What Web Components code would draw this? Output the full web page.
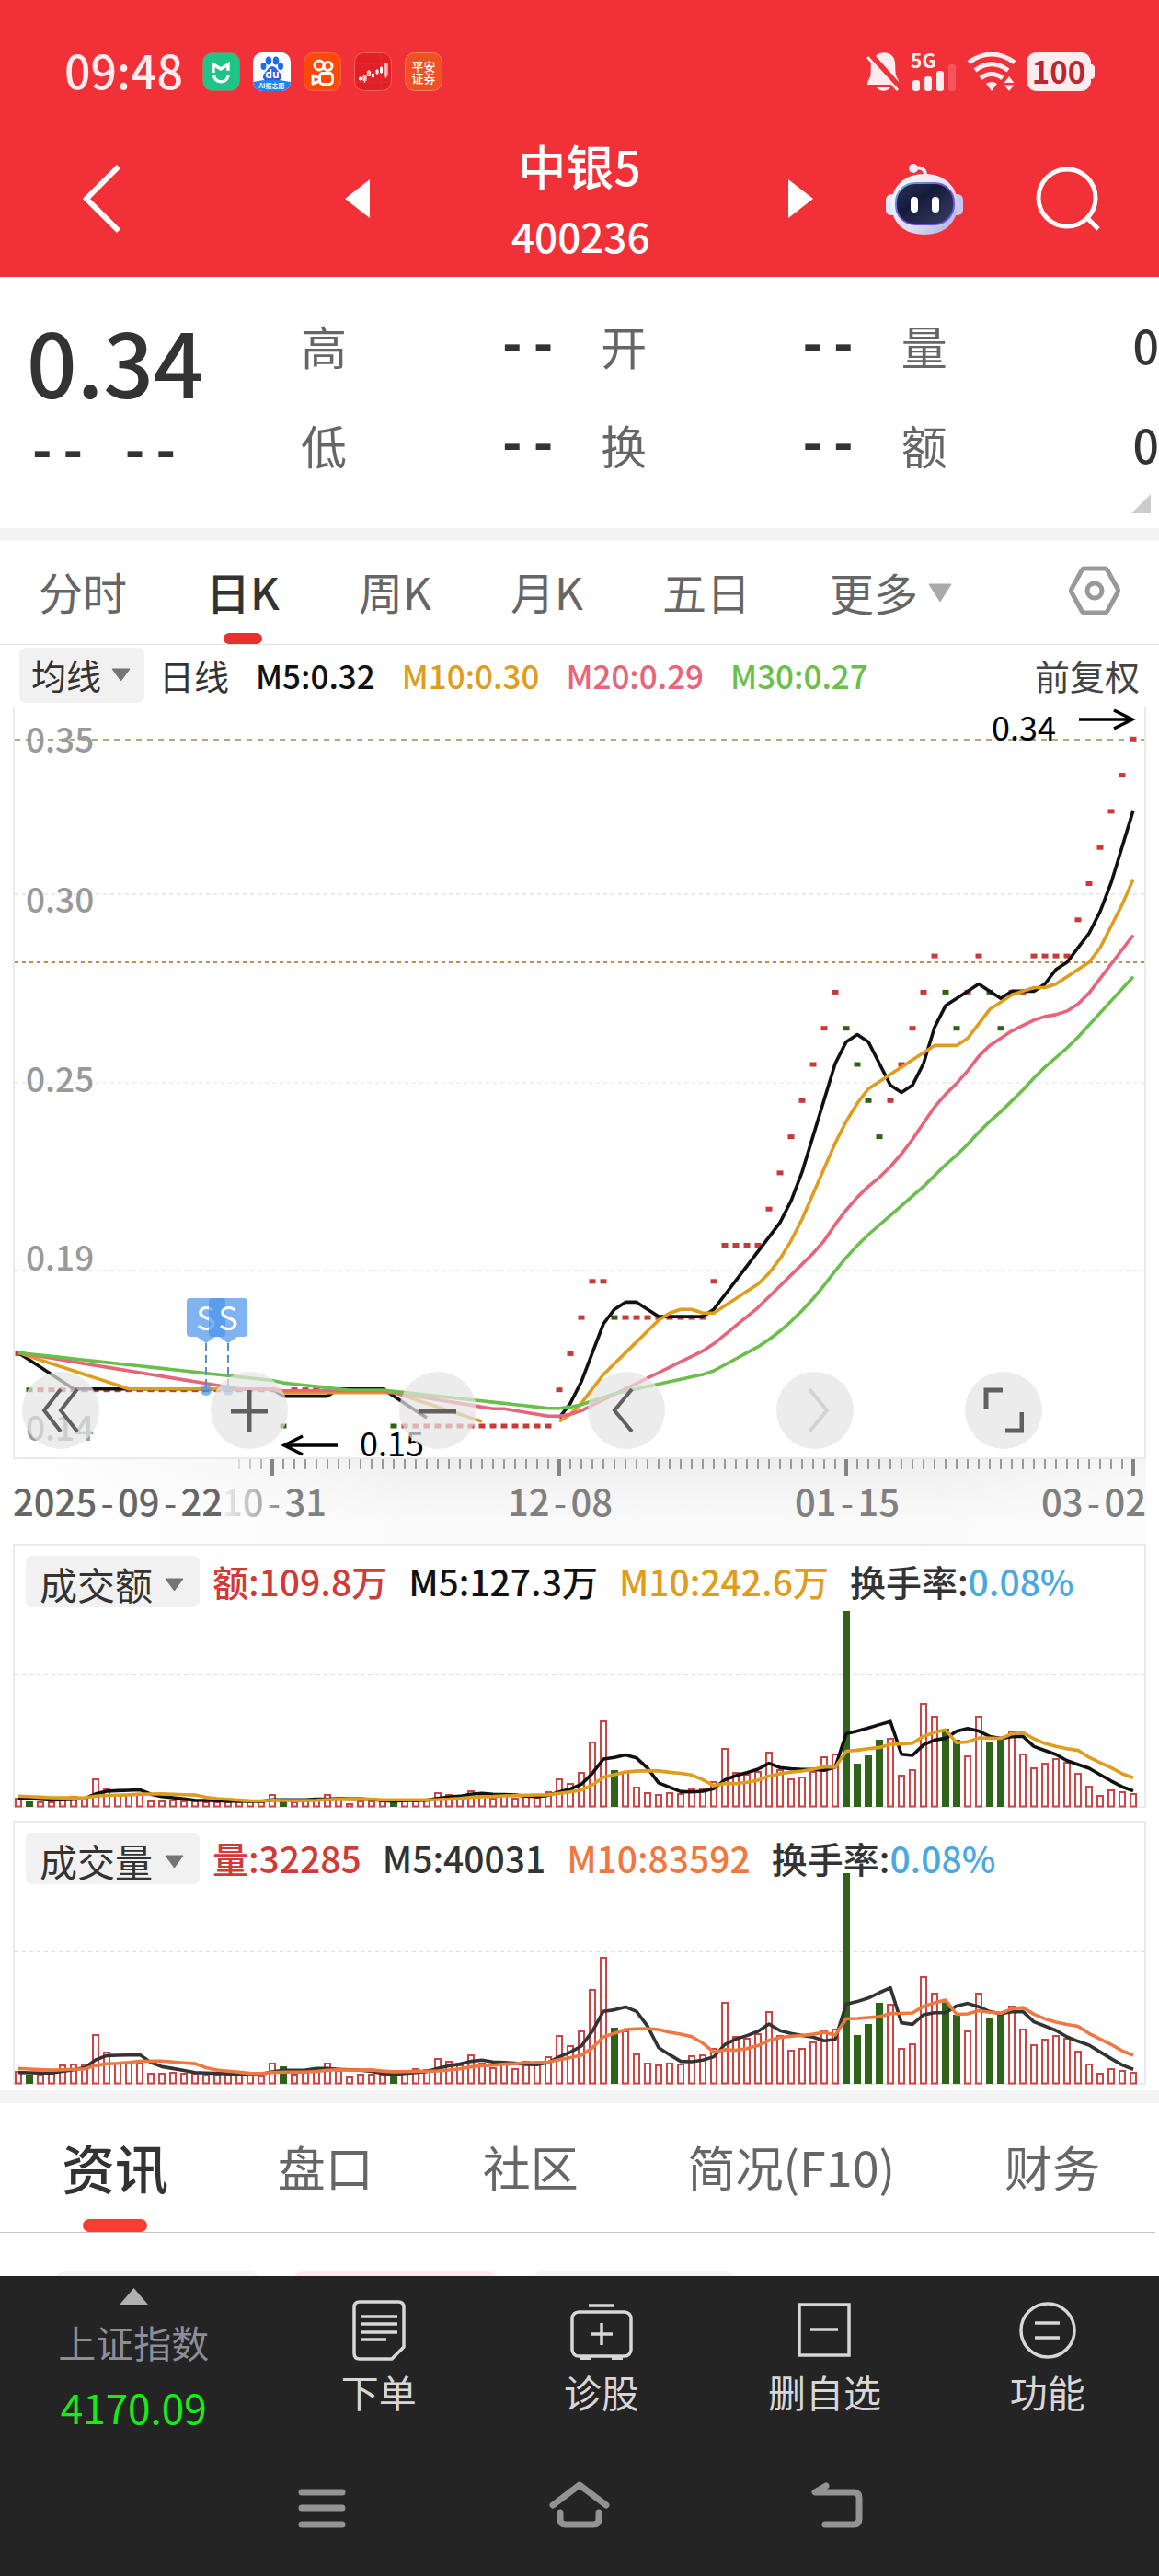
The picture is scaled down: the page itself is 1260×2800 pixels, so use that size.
<!DOCTYPE html>
<html lang="zh-CN">
<head>
<meta charset="utf-8">
<meta name="viewport" content="width=device-width">
<title>中银5 400236</title>
<style>
html,body{margin:0;padding:0;background:#fff}
body{font-family:"Noto Sans CJK SC",sans-serif;color:#333;min-height:100vh;display:flex;flex-direction:column}
</style>
</head>
<body>
<stock-page></stock-page>

<script>
const RESET = `*{box-sizing:border-box}
button,select{font:inherit;color:inherit;background:none;border:0;padding:0;margin:0;cursor:pointer}
a{color:inherit;text-decoration:none}
svg{display:block}`;

class Base extends HTMLElement {
  connectedCallback() {
    if (this.shadowRoot) return;
    this.attachShadow({ mode: 'open' }).innerHTML = `<style>${RESET}${this.css()}</style>${this.html()}`;
  }
  css() { return ''; }
  html() { return ''; }
}

/* ---------- status bar ---------- */
class StatusBar extends Base {
  css() { return `:host{display:flex;align-items:center;height:48px;margin:54px 70px 0 70px;color:#ffecee}
  .time{font-size:50px;line-height:42px;padding-bottom:6px;font-weight:500}
  .apps{display:flex;gap:14px;margin-left:21px}
  .sys{display:flex;align-items:center;margin-left:auto;gap:12px}
  svg{overflow:visible}
  text{font-family:"Noto Sans CJK SC",sans-serif}
  .bat{display:flex;align-items:center}
  .lvl{display:block;width:70px;height:42px;border-radius:11px;background:#ffecee;color:#b8282f;font:700 33px/40px "Noto Sans CJK SC",sans-serif;text-align:center}
  .nub{display:block;width:4px;height:16px;background:#ffecee;border-radius:0 4px 4px 0}`; }
  html() { return `<span class="time">09:48</span>
  <div class="apps">
   <svg width="41" height="42" viewBox="0 0 41 42"><rect x=".5" y=".5" width="40" height="41" rx="10" fill="#1fc586" stroke="#c9715c" stroke-opacity=".6"/><path d="M12 22V13l8 5 8-5v7M12.500 24c0 10 15 11 15.500 0" fill="none" stroke="#fff" stroke-width="3.400"/></svg>
   <svg width="41" height="42" viewBox="0 0 41 42"><defs><clipPath id="c"><rect width="41" height="42" rx="10"/></clipPath><linearGradient id="g" x1="0" y1="0" x2="1" y2="1"><stop offset="0" stop-color="#1d7cf2"/><stop offset="1" stop-color="#4a3fe0"/></linearGradient></defs><g clip-path="url(#c)"><rect width="41" height="42" fill="#fff"/><g fill="#1c6cea"><ellipse cx="17" cy="9" rx="3.300" ry="4.500"/><ellipse cx="25" cy="9" rx="3.300" ry="4.500"/><ellipse cx="11.500" cy="15" rx="3" ry="4"/><ellipse cx="30" cy="15" rx="3" ry="4"/></g><path d="M21 15c4 0 5 4 8 7 4 4 1 9-3 9H16c-5 0-7-5-3-9 3-3 4-7 8-7z" fill="url(#g)"/><path d="M0 32q20-5 41 0v10H0z" fill="#1e86f0"/></g><text x="21" y="28" font-size="12" font-weight="700" fill="#fff" text-anchor="middle">du</text><text x="20.500" y="39" font-size="7" font-weight="700" fill="#fff" text-anchor="middle">AI报志愿</text></svg>
   <svg width="41" height="42" viewBox="0 0 41 42"><rect x=".5" y=".5" width="40" height="41" rx="10" fill="#fe4a08" stroke="#ff6a4a"/><g fill="none" stroke="#fff" stroke-width="3"><circle cx="17" cy="14" r="5"/><circle cx="26.500" cy="15" r="4.500"/><rect x="17.500" y="22.500" width="14" height="12" rx="3.500"/><path d="M16 27.500l-6-2.500v9l6-2.500" stroke-linejoin="round"/></g></svg>
   <svg width="41" height="42" viewBox="0 0 41 42"><rect x=".5" y=".5" width="40" height="41" rx="10" fill="#e02024" stroke="#f06060"/><path d="M0 12h41M0 32h41M29 0v42" stroke="#ea3a3c" stroke-width=".7"/><g fill="none" stroke="#ffd9d9" stroke-width="1.300"><path d="M7 26v5M11.500 25v8M16 19v7M20.500 22v6M25 18v7M29.500 15v8M34.500 11v17"/><rect x="10" y="26" width="3" height="4"/><rect x="14.500" y="21" width="3" height="4"/><rect x="33" y="13" width="3" height="12"/></g><g fill="#fff"><rect x="5" y="27" width="4" height="3"/><rect x="19" y="23" width="3" height="4"/><rect x="23.500" y="19" width="3" height="4"/><rect x="28" y="16" width="3" height="6"/></g></svg>
   <svg width="41" height="42" viewBox="0 0 41 42"><rect x=".5" y=".5" width="40" height="41" rx="10" fill="#f05023" stroke="#f58060"/><g font-size="13" font-weight="500" fill="#fff" text-anchor="middle"><text x="20.500" y="20">平安</text><text x="20.500" y="33">证券</text></g></svg>
  </div>
  <div class="sys">
   <svg width="36" height="42" viewBox="0 0 36 42" fill="#ffecee"><path d="M10 4c4-5 14-5 18 0 4 4 3 10 3.500 17 0 5 3.500 8 3.500 11L10 4z"/><path d="M5 11c-.5 3 0 7-.5 12C4.500 28 1 30 1 35h26z"/><path d="M11 38h15c-3 5-12 5-15 0z"/><path d="M1 5l33 36" stroke="#ffecee" stroke-width="3"/></svg>
   <svg width="50" height="42" viewBox="0 0 50 42" fill="#ffecee"><text x="0" y="17" font-size="21" font-weight="700">5G</text><rect x="2" y="30" width="8" height="12" rx="3"/><rect x="15" y="26" width="8" height="16" rx="3"/><rect x="28" y="20" width="8" height="22" rx="3"/><rect x="41" y="13" width="8" height="29" rx="3" fill-opacity=".2"/></svg>
   <svg width="52" height="42" viewBox="0 0 52 42"><g fill="none" stroke="#ffecee" stroke-width="5"><path d="M1 11Q26-7 51 11"/><path d="M8 19.500Q26 6 44 19.500"/><path d="M14 28Q26 19 38 28"/></g><path d="M20 34q6-4 12 0l-6 8zM39.500 33l5.500-7 5.500 7zM39.500 35.500l5.500 6.500 5.500-6.500z" fill="#ffecee"/></svg>
   <div class="bat"><span class="lvl">100</span><span class="nub"></span></div>
  </div>`; }
}

/* ---------- title bar ---------- */
class TitleBar extends Base {
  css() { return `:host{display:grid;grid-template-columns:1fr 148px 1fr;align-items:center;height:199px;padding-top:32px;color:#fff}
  .l,.r{display:flex;align-items:center;justify-content:space-between;padding-bottom:4px}
  .l{padding-left:90px;padding-right:154px}.r{padding-left:153px;padding-right:64px}
  h1{margin:0;font-size:52px;font-weight:500;line-height:76px;text-align:center;white-space:nowrap}
  p{margin:0;font-size:44px;font-weight:500;line-height:76px;text-align:center;white-space:nowrap}`; }
  html() { return `<div class="l">
    <button aria-label="返回"><svg width="42" height="76" viewBox="0 0 42 76"><path d="M39 3L4 38l35 35" fill="none" stroke="#fff" stroke-width="6"/></svg></button>
    <button aria-label="上一只"><svg width="27" height="42" viewBox="0 0 27 42"><path d="M27 0v42L0 21z" fill="#fff"/></svg></button></div>
   <div><h1>中银5</h1><p>400236</p></div>
   <div class="r">
    <button aria-label="下一只"><svg width="27" height="42" viewBox="0 0 27 42"><path d="M0 0v42l27-21z" fill="#fff"/></svg></button>
    <button aria-label="智能助手"><svg width="84" height="78" viewBox="0 0 84 78"><defs><linearGradient id="h" x1="0" y1="0" x2="1" y2="1"><stop offset="0" stop-color="#fff"/><stop offset=".6" stop-color="#dcdcf4"/><stop offset="1" stop-color="#a7a9dc"/></linearGradient><linearGradient id="f" x1="0" y1="0" x2="1" y2="1"><stop offset="0" stop-color="#2b3358"/><stop offset=".4" stop-color="#141b3a"/><stop offset="1" stop-color="#3a4068"/></linearGradient><linearGradient id="e" x1="0" y1="0" x2="1" y2="1"><stop offset="0" stop-color="#5ec8dc"/><stop offset=".5" stop-color="#7c3fd0"/><stop offset="1" stop-color="#6a62e8"/></linearGradient></defs>
     <path d="M31 6c8-2 12 1 12 8" fill="none" stroke="#ecebfa" stroke-width="4"/><circle cx="30" cy="6" r="5" fill="#ecebfa"/>
     <rect x="0" y="34" width="14" height="23" rx="6" fill="#e6e6f8"/><rect x="70" y="34" width="14" height="23" rx="6" fill="#c5c7ee"/>
     <path d="M42 12c22 0 36 14 36 33S65 78 42 78 6 64 6 45s14-33 36-33z" fill="url(#h)"/>
     <rect x="11" y="22" width="63" height="45" rx="21" fill="url(#f)" stroke="url(#e)" stroke-width="2"/>
     <rect x="27" y="37" width="8" height="17" rx="4" fill="#fff"/><rect x="50" y="37" width="8" height="17" rx="4" fill="#fff"/></svg></button>
    <button aria-label="搜索"><svg width="70" height="70" viewBox="0 0 70 70" fill="none" stroke="#fff" stroke-width="5"><circle cx="34" cy="34" r="31"/><path d="M56 56l12 12"/></svg></button>
   </div>`; }
}

/* ---------- quote summary ---------- */
class QuoteCell extends Base {
  css() { return `:host{display:flex;justify-content:space-between;font-size:50px;line-height:108px;color:#666}
  .v{color:#333;font-weight:500;line-height:106px}.d{font:700 56px/112px "Liberation Mono",monospace;height:108px}`; }
  html() { const v = this.getAttribute('value');
    return `<span><slot></slot></span><span class="v${v === '--' ? ' d' : ''}">${v}</span>`; }
}
class QuotePanel extends Base {
  css() { return `:host{display:flex;position:relative;padding:20px 0 37px 29px;background:#fff;border-bottom:14px solid #f4f4f4}
  .p{flex:0 0 298px}.price{font-size:96px;font-weight:500;line-height:142px;color:#333}
  .chg{font:700 56px/60px "Liberation Mono",monospace;color:#333;white-space:pre}
  .g{flex:1;display:grid;grid-template-columns:repeat(3,1fr);column-gap:46px}
  .more{position:absolute;right:9px;bottom:16px}`; }
  html() { return `<div class="p"><div class="price">0.34</div><div class="chg">-- --</div></div>
  <div class="g"><quote-cell value="--">高</quote-cell><quote-cell value="--">开</quote-cell><quote-cell value="0">量</quote-cell>
  <quote-cell value="--">低</quote-cell><quote-cell value="--">换</quote-cell><quote-cell value="0">额</quote-cell></div>
  <button class="more" aria-label="展开"><svg width="21" height="21"><path d="M21 0v21H0z" fill="#ccc"/></svg></button>`; }
}

/* ---------- drop-down ---------- */
class PickBox extends Base {
  css() { return `:host{display:inline-grid;align-items:center;border-radius:7px}
  select,svg{grid-area:1/1}
  select{appearance:none;height:100%;padding:0 var(--pr,46px) 2px var(--pl,13px);outline:0;line-height:normal}
  svg{justify-self:end;margin-right:var(--ar,15px);pointer-events:none}`; }
  html() { const t = this.getAttribute('text'), w = +(this.getAttribute('arrow') || 21), c = this.getAttribute('tint') || '#757575';
    const h = w > 22 ? 21 : 15;
    return `<select aria-label="${t}"><option>${t}</option></select><svg width="${w}" height="${h}" viewBox="0 0 ${w} ${h}"><path d="M1 1h${w - 2}L${w / 2} ${h - 1}z" fill="${c}" stroke="${c}" stroke-linejoin="round"/></svg>`; }
}

/* ---------- period tabs ---------- */
class PeriodTabs extends Base {
  css() { return `:host{display:flex;align-items:stretch;gap:86px;height:113px;padding:0 42px;border-bottom:1px solid #e3e3e3;font-size:48px;color:#666}
  button{position:relative;white-space:nowrap;padding-bottom:4px}
  .on{color:#333;font-weight:500}
  .on::after{content:"";position:absolute;left:50%;bottom:0;width:42px;height:12px;margin-left:-21px;border-radius:6px;background:#e53230}
  pick-box{--pl:0px;--pr:36px;--ar:0px}
  .set{margin-left:auto}`; }
  html() { return `<button>分时</button><button class="on">日K</button><button>周K</button><button>月K</button><button>五日</button>
  <pick-box text="更多" arrow="26" tint="#aaa"></pick-box>
  <button class="set" aria-label="设置"><svg width="56" height="54" viewBox="0 0 56 54" fill="none" stroke="#999" stroke-linejoin="round"><path d="M17 3h22q2 0 3 2l11 20q1 2 0 4L42 49q-1 2-3 2H17q-2 0-3-2L3 29q-1-2 0-4L14 5q1-2 3-2z" stroke-width="5"/><circle cx="28" cy="27" r="8" stroke-width="5"/></svg></button>`; }
}

/* ---------- moving average legend ---------- */
class MaLegend extends Base {
  css() { return `:host{display:flex;align-items:center;height:67px;padding:0 21px 2px;gap:29px;font-size:38px;color:#333;white-space:nowrap}
  pick-box{height:60px;background:#f1f1f1;margin-right:-13px}
  b{font-weight:400}span{font-size:35px;font-weight:500}.adj{margin-left:auto;color:#444}`; }
  html() { return `<pick-box text="均线"></pick-box><b>日线</b>
  <span style="color:#111">M5:0.32</span><span style="color:#e09c1c">M10:0.30</span><span style="color:#e8647a">M20:0.29</span><span style="color:#6abf4b">M30:0.27</span>
  <button class="adj">前复权</button>`; }
}

/* ---------- chart helpers ---------- */
const px = i => 6 + 12 * i;
const GREEN = new Set([1, 24, 34, 54, 75, 76, 77, 78, 84, 85, 88, 89]);
const rep = (v, n) => Array(n).fill(v);
const CLOSE = [2, ...rep(1, 23), 0, ...rep(1, 9), ...rep(0, 15), 1, 2, 3, 4, 4, ...rep(3, 9), 4, 5, 5, 5, 5,
  6, 7, 8, 9, 10, 11, 12, 11, 10, 9, 8, 9, 10, 11, 12, 13, 12, 11, 12, 13, 12, 11, 12, 12, 13, 13, 13, 13, 14, 15, 16, 17, 18, 19];
const average = (data, n, before) => data.map((_, i) => {
  let s = 0; for (let k = i - n + 1; k <= i; k++) s += k < 0 ? before : data[k]; return s / n; });
const curve = (vals, y, skip) => { let d = '', pen = false;
  vals.forEach((v, i) => { if (skip && v < 1e-6) { pen = false; return; } d += `${pen ? 'L' : 'M'}${px(i)} ${y(v).toFixed(1)}`; pen = true; }); return d; };
const line = (d, c) => `<path d="${d}" fill="none" stroke="${c}" stroke-width="3.600" stroke-linejoin="round"/>`;

/* ---------- candle chart ---------- */
class KChart extends Base {
  css() { return `:host{display:block;position:relative;margin:0 14px}
  svg.c{width:100%;height:auto}text{font-family:"Noto Sans CJK SC",sans-serif}
  .tools{position:absolute;left:10px;right:113px;bottom:11px;display:flex;justify-content:space-between}
  .tools button{width:84px;height:84px;border-radius:50%;background:rgba(228,228,228,.71);display:grid;place-items:center}
  .tools svg{fill:none;stroke:#606060;stroke-width:4}`; }
  html() {
    const y = v => 782 - 39.3 * v, yl = v => y(v) - 1;
    const dots = CLOSE.map((v, i) => `<rect x="${px(i) - 3.500}" y="${(y(v) - 2.500).toFixed(1)}" width="7" height="5" fill="${GREEN.has(i) ? '#2f6314' : '#c83a3a'}"/>`).join('');
    const grid = (gy, c, dash, w) => `<path d="M2 ${gy}H1230" stroke="${c}" stroke-width="${w}" stroke-dasharray="${dash}"/>`;
    const lab = (t, ty) => `<text x="14" y="${ty}">${t}</text>`;
    const flag = x => `<g fill="#4a93ec" fill-opacity=".7"><path d="M${x - 17} 643h34q4 0 4 4v34q0 4-4 4h-7l-10 7-10-7h-7q-4 0-4-4v-34q0-4 4-4z"/><circle cx="${x}" cy="743" r="6"/></g><path d="M${x} 692v50" stroke="#5b8fc4" stroke-width="2" stroke-dasharray="9 4"/><text x="${x}" y="678" font-size="36" fill="#fff" text-anchor="middle">S</text>`;
    return `<svg class="c" viewBox="0 0 1232 818"><rect x="1" y="0" width="1230" height="817" fill="none" stroke="#eaeaea" stroke-width="2"/>
    ${grid(204, '#e2e2e2', '4 4', 1.500)}${grid(409, '#e2e2e2', '4 4', 1)}${grid(613, '#e2e2e2', '4 4', 1.500)}
    ${grid(36, '#b5a67c', '6 6', 2)}${grid(278, '#c08f50', '4 4', 2)}
    <g font-size="37" font-weight="500" fill="#999">${lab('0.35', 50)}${lab('0.30', 224)}${lab('0.25', 419)}${lab('0.19', 613)}${lab('0.14', 798)}</g>
    ${dots}${line(curve(average(CLOSE, 5, 2), yl, true), '#111')}${line(curve(average(CLOSE, 10, 2), yl, true), '#e09c1c')}${line(curve(average(CLOSE, 20, 2), yl), '#e8647a')}${line(curve(average(CLOSE, 30, 2), yl), '#6abf4b')}
    ${flag(210)}${flag(234)}
    <g fill="none" stroke="#000" stroke-width="3.500"><path d="M1159 14h58M1197 4l20 10-20 10"/><path d="M353 803h-58M315 793l-20 10 20 10"/></g>
    <g font-size="36" fill="#000"><text x="1064" y="37">0.34</text><text x="377" y="815">0.15</text></g></svg>
    <div class="tools">
     <button aria-label="最早"><svg width="42" height="50"><path d="M21 2L3 25l18 23M39 2L21 25l18 23"/></svg></button>
     <button aria-label="放大"><svg width="40" height="48"><path d="M20 2v46M0 25h40" stroke-width="5"/></svg></button>
     <button aria-label="缩小"><svg width="40" height="48"><path d="M0 25h40" stroke-width="5"/></svg></button>
     <button aria-label="向左"><svg width="42" height="50"><path d="M27 2L8 25l19 23"/></svg></button>
     <button aria-label="向右"><svg width="42" height="50"><path d="M15 2l19 23-19 23" stroke="#d3d3d3"/></svg></button>
     <button aria-label="全屏"><svg width="44" height="50"><path d="M3 24V3h18M42 27v20H24" stroke-width="5"/></svg></button>
    </div>`;
  }
}

/* ---------- time axis ---------- */
class TimeAxis extends Base {
  css() { return `:host{display:block;margin:0 14px}svg{width:100%;height:auto}
  text{font:500 40px "Noto Sans CJK SC",sans-serif}.h{font:400 38px "Liberation Mono",monospace}`; }
  html() {
    let t = '';
    for (let i = 20; i < 102; i++) { const big = [23, 49, 75, 101].includes(i);
      t += `<path d="M${px(i)} 0v${big ? 18 : 11}" stroke="${big ? '#858585' : '#999'}" stroke-width="${big ? 4 : 2}"${i < 23 ? ` stroke-opacity="${.3 + (i - 20) * .2}"` : ''}/>`; }
    const d = s => s.replace(/-/g, '<tspan class="h">-</tspan>');
    return `<svg viewBox="0 0 1232 92"><defs>
     <linearGradient id="v" x1="0" y1="0" x2="0" y2="1"><stop offset="0" stop-color="#eeeeee"/><stop offset=".75" stop-color="#fafafa"/><stop offset="1" stop-color="#fafafa"/></linearGradient>
     <linearGradient id="w" x1="0" y1="0" x2="1" y2="0"><stop offset="0" stop-color="#fff"/><stop offset=".22" stop-color="#fff" stop-opacity=".5"/><stop offset=".36" stop-color="#fff" stop-opacity="0"/><stop offset=".8" stop-color="#fff" stop-opacity="0"/><stop offset="1" stop-color="#fff" stop-opacity=".5"/></linearGradient>
     <linearGradient id="t" gradientUnits="userSpaceOnUse" x1="228" y1="0" x2="300" y2="0"><stop offset="0" stop-color="#808080" stop-opacity=".1"/><stop offset="1" stop-color="#808080"/></linearGradient></defs>
     <rect width="1232" height="92" fill="url(#v)"/><rect width="1232" height="92" fill="url(#w)"/>${t}
     <text x="0" y="62" fill="#666">${d('2025-09-22')}</text><text x="227" y="62" fill="url(#t)">${d('10-31')}</text>
     <g fill="#808080"><text x="595" y="62" text-anchor="middle">${d('12-08')}</text><text x="907" y="62" text-anchor="middle">${d('01-15')}</text><text x="1232" y="62" text-anchor="end">${d('03-02')}</text></g></svg>`;
  }
}

/* ---------- volume panels ---------- */
const AMOUNT = [10,6,6,6,11,12,11,31,20,14,14,14,7,7,8,7,7,6,6,6,6,6,6,14,6,6,7,9,14,9,4,7,7,7,7,7,7,9,16,14,12,18,14,10,13,10,12,11,17,31,26,38,71,94,40,39,22,16,14,16,15,20,20,28,64,38,36,39,60,41,31,33,39,55,58,213,47,56,73,75,35,41,113,99,85,73,56,99,70,74,83,58,43,48,53,49,37,23,13,19,17,15];
const VOLUME = [14,10,11,12,21,22,21,54,35,23,23,23,12,12,13,12,12,10,10,11,11,11,9,23,19,11,13,17,23,15,8,11,11,11,11,12,17,16,28,25,21,32,23,18,22,17,25,22,30,53,42,58,103,138,61,58,33,23,21,23,22,31,32,39,89,52,50,55,79,53,37,39,46,59,60,229,53,65,88,87,39,44,117,99,88,75,58,99,72,77,85,60,43,49,53,50,36,22,12,17,15,13];
class VolPanel extends Base {
  css() { return `:host{display:grid;margin:0 14px}
  svg.c{grid-area:1/1;width:100%;height:auto}
  .g{grid-area:1/1;align-self:start;display:flex;align-items:center;gap:23px;padding:12px 14px;font-size:39px;font-weight:500;white-space:nowrap}
  span{padding-bottom:2px}
  pick-box{height:56px;background:#f1f1f1;font-size:41px;font-weight:400;margin-right:-9px;color:#333;--pl:15px;--pr:51px;--ar:17px}
  i{font-style:normal;color:#4aa8e0}`; }
  html() {
    const amt = this.getAttribute('kind') === 'amount', data = amt ? AMOUNT : VOLUME;
    const y = v => 286 - v;
    const c5 = amt ? '#111' : '#333', c10 = amt ? '#e09c1c' : '#f07840';
    const bars = data.map((v, i) => GREEN.has(i) ? `<rect x="${px(i) - 4}" y="${y(v)}" width="8" height="${v}" fill="#30631a"/>`
      : `<rect x="${px(i) - 3}" y="${y(v) + 1}" width="6" height="${v - 1.500}" fill="#fff" stroke="#cc4444" stroke-width="2"/>`).join('');
    return `<svg class="c" viewBox="0 0 1232 288"><path d="M1 287V1H1231V286" fill="none" stroke="#eaeaea" stroke-width="2"/><path d="M0 286H1232" stroke="#eaeaea" stroke-width="2"/>
     <path d="M2 142.500H1230" stroke="#dcdcdc" stroke-dasharray="4 4"/>${bars}
     ${line(curve(average(data, 5, amt ? 10 : 12), y), c5)}${line(curve(average(data, 10, amt ? 12 : 17), y), c10)}</svg>
     <div class="g"><pick-box text="${amt ? '成交额' : '成交量'}"></pick-box>
     <span style="color:#d23a38">${amt ? '额:109.8万' : '量:32285'}</span><span style="color:${c5}">${amt ? 'M5:127.3万' : 'M5:40031'}</span>
     <span style="color:${c10}">${amt ? 'M10:242.6万' : 'M10:83592'}</span><span>换手率:<i>0.08%</i></span></div>`;
  }
}

/* ---------- info tabs ---------- */
class InfoTabs extends Base {
  css() { return `:host{display:block;border-top:14px solid #f4f4f4}
  nav{display:flex;justify-content:space-between;height:141px;padding:0 60px 0 67px;border-bottom:1px solid #c4c4c4;margin-right:4px;font-size:52px;color:#666}
  button{position:relative;white-space:nowrap;padding-bottom:3px}
  .on{font-size:58px;font-weight:500;color:#333}
  .on::after{content:"";position:absolute;left:50%;bottom:0;width:70px;height:14px;margin-left:-35px;border-radius:7px;background:#fa3c32}
  .chips{display:flex;gap:33px;height:47px;padding:42px 58px 0;overflow:hidden}
  .chips span{flex:0 0 226px;height:60px;border-radius:14px;background:#f5f5f5}.chips .r{background:#fdebeb}`; }
  html() { return `<nav><button class="on">资讯</button><button>盘口</button><button>社区</button><button>简况(F10)</button><button>财务</button></nav>
  <div class="chips"><span></span><span class="r"></span><span></span></div>`; }
}

/* ---------- bottom bar ---------- */
class BottomBar extends Base {
  css() { return `:host{display:flex;height:190px;color:#d8d6d8;font-size:41px}
  .idx{flex:290;display:flex;flex-direction:column;align-items:center;padding-top:13px;color:#8f8d98}
  .idx .n{line-height:60px;margin-top:10px}.idx .v{font-size:44px;line-height:60px;margin-top:11px;color:#14ee14}
  .b{flex:242;display:flex;flex-direction:column;align-items:center;padding-top:26px}
  .b span{line-height:60px;margin-top:3px}
  .b svg{fill:none;stroke:#d8d6d8;stroke-width:3.500}`; }
  html() { return `<button class="idx"><svg width="31" height="18"><path d="M15.500 0L31 18H0z" fill="#b0b0b0"/></svg><span class="n">上证指数</span><span class="v">4170.09</span></button>
  <button class="b"><svg width="58" height="66" viewBox="0 0 58 66"><path d="M8 2h42q6 0 6 6v43L43 64H8q-6 0-6-6V8q0-6 6-6z"/><path d="M9 18h40M9 26h40M9 35h40M9 43h28"/></svg><span>下单</span></button>
  <button class="b"><svg width="68" height="66" viewBox="0 0 68 66"><rect x="2" y="13" width="64" height="48" rx="7"/><path d="M20 6h28M34 25v24M22 37h24"/><path d="M11 63h12M45 63h12" stroke-width="4"/></svg><span>诊股</span></button>
  <button class="b"><svg width="58" height="66" viewBox="0 0 58 66"><rect x="2" y="5" width="54" height="55"/><path d="M14 32h30"/></svg><span>删自选</span></button>
  <button class="b"><svg width="62" height="66" viewBox="0 0 62 66"><circle cx="31" cy="33" r="29"/><path d="M17 25h27M17 41h27"/></svg><span>功能</span></button>`; }
}
class SystemNav extends Base {
  css() { return `:host{display:flex;justify-content:center;padding:32px 0 48px}
  button{width:280px;display:grid;place-items:center}svg{fill:none;stroke:#939393;stroke-width:7;stroke-linecap:round;stroke-linejoin:round}`; }
  html() { return `<button aria-label="最近任务"><svg width="56" height="56"><path d="M6 13h44M6 30h44M6 48h44"/></svg></button>
  <button aria-label="主屏幕"><svg width="68" height="56"><path d="M5 27L34 5l29 22M13 35v7q0 6 6 6h30q6 0 6-6v-7"/></svg></button>
  <button aria-label="返回"><svg width="60" height="56"><path d="M18 6L6 13h42q6 0 6 6v23q0 6-6 6H17"/></svg></button>`; }
}

class StockPage extends Base {
  css() { return `:host{display:flex;flex-direction:column;flex:1}
  header{background:#f23037;display:flex;flex-direction:column}
  .gap{height:13px}.end{height:5px}
  footer{background:#242424;flex:1}`; }
  html() { return `<header><status-bar></status-bar><title-bar></title-bar></header>
  <quote-panel></quote-panel><period-tabs></period-tabs><ma-legend></ma-legend>
  <k-chart></k-chart><time-axis></time-axis>
  <vol-panel kind="amount"></vol-panel><div class="gap"></div><vol-panel kind="volume"></vol-panel><div class="end"></div>
  <info-tabs></info-tabs><footer><bottom-bar></bottom-bar><system-nav></system-nav></footer>`; }
}
Object.entries({ 'status-bar': StatusBar, 'title-bar': TitleBar, 'quote-cell': QuoteCell, 'quote-panel': QuotePanel, 'pick-box': PickBox,
  'period-tabs': PeriodTabs, 'ma-legend': MaLegend, 'k-chart': KChart, 'time-axis': TimeAxis, 'vol-panel': VolPanel, 'info-tabs': InfoTabs,
  'bottom-bar': BottomBar, 'system-nav': SystemNav, 'stock-page': StockPage }).forEach(([n, c]) => customElements.define(n, c));
</script>
</body>
</html>
